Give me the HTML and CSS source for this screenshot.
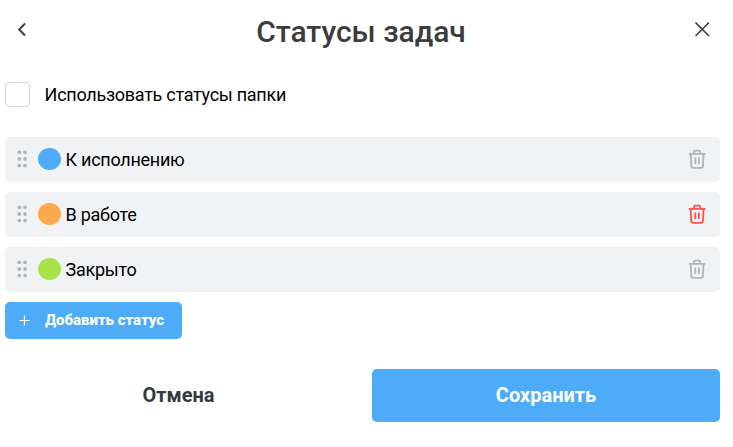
FILE: index.html
```
<!DOCTYPE html>
<html lang="ru">
<head>
  <meta charset="UTF-8">
  <title>Статусы задач</title>
  <meta name="viewport" content="width=device-width, initial-scale=1.0">
  <link rel="stylesheet" href="styles.css">
</head>
<body>
  <svg class="sprite" width="0" height="0">
    <symbol id="icon-drag" viewBox="0 0 10 18">
      <circle cx="2.3" cy="2.3" r="1.9"/>
      <circle cx="8" cy="2.3" r="1.9"/>
      <circle cx="2.3" cy="9" r="1.9"/>
      <circle cx="8" cy="9" r="1.9"/>
      <circle cx="2.3" cy="15.6" r="1.9"/>
      <circle cx="8" cy="15.6" r="1.9"/>
    </symbol>
    <symbol id="icon-trash" viewBox="0 0 18 20">
      <path d="M.8 4.8h16.6M2.6 4.900l.7 12q.1 1.900 1.900 1.900h7.800q1.800 0 1.900-1.900l.7-12M6 4.500V2.900q0-1.300 1.300-1.300h3.600q1.300 0 1.300 1.300v1.600M7.300 8.500v6.600M10.900 8.500v6.600"/>
    </symbol>
  </svg>

  <div class="modal">
    <div class="header">
      <button class="icon-btn" title="Назад">
        <svg width="12" height="16" viewBox="0 0 12 16"><path d="M9 2.5L3.2 8.5L9 14.5"/></svg>
      </button>
      <h1 class="title">Статусы задач</h1>
      <button class="icon-btn close" title="Закрыть">
        <svg width="16" height="16" viewBox="0 0 16 16"><path d="M1.5 1.5l13.5 13.5M15 1.5L1.5 15"/></svg>
      </button>
    </div>

    <label class="check">
      <input type="checkbox" class="check-box">
      <span>Использовать статусы папки</span>
    </label>

    <!-- Status list -->
    <div class="statuses">
      <div class="status">
        <svg class="drag"><use href="#icon-drag"/></svg>
        <span class="color blue"></span>
        <span class="name">К исполнению</span>
        <svg class="trash"><use href="#icon-trash"/></svg>
      </div>
      <div class="status">
        <svg class="drag"><use href="#icon-drag"/></svg>
        <span class="color orange"></span>
        <span class="name">В работе</span>
        <svg class="trash active"><use href="#icon-trash"/></svg>
      </div>
      <div class="status">
        <svg class="drag"><use href="#icon-drag"/></svg>
        <span class="color green"></span>
        <span class="name">Закрыто</span>
        <svg class="trash"><use href="#icon-trash"/></svg>
      </div>
    </div>

    <button class="add-btn">
      <svg width="11" height="11" viewBox="0 0 11 11"><path d="M5.5 .5v10M.5 5.500h10"/></svg>
      Добавить статус
    </button>

    <div class="footer">
      <button class="btn cancel">Отмена</button>
      <button class="btn save">Сохранить</button>
    </div>
  </div>
</body>
</html>
```
FILE: styles.css
```
* {
  box-sizing: border-box;
}
body {
  margin: 0;
  background: #fff;
  color: #000;
  font-family: Roboto, Arial, sans-serif;
  font-size: 18px;
  letter-spacing: -0.27px;
}
button {
  border: none;
  background: none;
  padding: 0;
  font-family: inherit;
  cursor: pointer;
}
.sprite {
  display: none;
}
.modal {
  width: 720px;
  padding-left: 5px;
}
.header {
  display: flex;
  align-items: center;
  justify-content: space-between;
  height: 62px;
  padding: 0 10px 0 11px;
}
.title {
  margin: 0;
  font-size: 30px;
  font-weight: 500;
  letter-spacing: 0;
  color: #3c3c3c;
}
.icon-btn {
  display: flex;
  padding-bottom: 4px;
}
.icon-btn svg {
  fill: none;
  stroke: #3c3f44;
  stroke-width: 2;
}
.close svg {
  stroke-width: 1.7;
}
.check {
  display: flex;
  align-items: center;
  gap: 14.6px;
  height: 25px;
  margin: 20px 0 30px;
}
.check-box {
  appearance: none;
  width: 25px;
  height: 25px;
  margin: 0;
  border: 1px solid #ced4da;
  border-radius: 4px;
}
.statuses {
  display: flex;
  flex-direction: column;
  gap: 10px;
}
.status {
  display: flex;
  align-items: center;
  height: 45px;
  padding: 0 14px 1px 12px;
  background: #f1f2f4;
  border-radius: 5px;
}
.drag {
  width: 10px;
  height: 18px;
  margin-right: 11px;
  fill: #adb5bd;
}
.color {
  width: 23px;
  height: 22px;
  margin-right: 4.6px;
  border-radius: 50%;
}
.blue { background: #4dabf7; }
.orange { background: #ffa94d; }
.green { background: #a9e34b; }
.name {
  flex: 1;
  padding-top: 1px;
}
.trash {
  width: 18px;
  height: 20px;
  fill: none;
  stroke: #adb5bd;
  stroke-width: 1.8;
}
.trash.active {
  stroke: #fa5252;
}
.add-btn {
  display: flex;
  align-items: center;
  gap: 15px;
  width: 177px;
  height: 37px;
  margin-top: 10px;
  padding: 0 0 1px 14px;
  background: #4dabf7;
  border-radius: 5px;
  color: #fff;
  font-size: 15px;
  font-weight: 800;
  letter-spacing: -0.04px;
}
.add-btn svg {
  fill: none;
  stroke: #fff;
  stroke-width: 1.2;
}
.footer {
  display: grid;
  grid-template-columns: 1fr 348px;
  gap: 20px;
  margin-top: 30px;
}
.btn {
  height: 53px;
  padding-bottom: 2px;
  border-radius: 5px;
  font-size: 20px;
  font-weight: 700;
}
.cancel {
  color: #343a40;
}
.save {
  background: #4dabf7;
  color: #fff;
}
```
